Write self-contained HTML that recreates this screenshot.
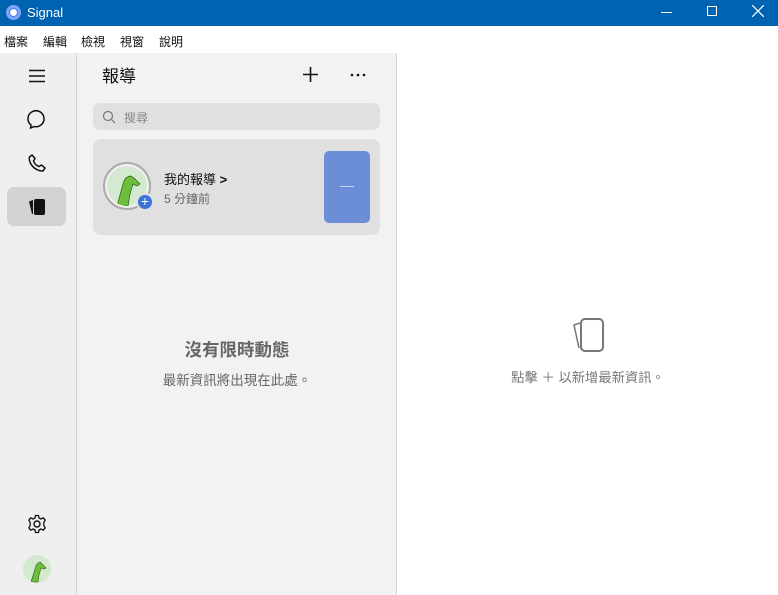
<!DOCTYPE html>
<html><head><meta charset="utf-8"><style>
*{margin:0;padding:0;box-sizing:border-box}
body{width:778px;height:595px;overflow:hidden;background:#fff;font-family:"Liberation Sans","Noto Sans CJK TC",sans-serif;position:relative}
.title{position:absolute;left:0;top:0;width:778px;height:26px;background:#0063b1;color:#fff;font-size:13px}
.menu{position:absolute;top:26px;left:0;width:778px;height:27px;background:#fff;font-size:12px;color:#111}
.menu span{position:absolute;top:7px}
.side{position:absolute;left:0;top:53px;width:77px;height:542px;background:#efefef;border-right:1px solid #d4d4d4}
.mid{position:absolute;left:77px;top:53px;width:320px;height:542px;background:#f2f2f2;border-right:1px solid #d4d4d4}
.abs{position:absolute}
</style></head><body>
<div class="title">
 <div class="abs" style="left:6px;top:5px;width:15px;height:15px;border-radius:50%;background:#3a76f0;box-shadow:inset 0 0 0 3px #7ea6f8"></div>
 <div class="abs" style="left:10px;top:9px;width:7px;height:7px;border-radius:50%;background:#fff"></div>
 <span class="abs" style="left:27px;top:5px">Signal</span>
 <div class="abs" style="left:661px;top:12px;width:11px;height:1px;background:#fff"></div>
 <div class="abs" style="left:707px;top:6px;width:10px;height:10px;border:1px solid #fff"></div>
 <svg class="abs" style="left:752px;top:5px" width="12" height="12"><path d="M0 0L12 12M12 0L0 12" stroke="#fff" stroke-width="1.2"/></svg>
</div>
<div class="menu"><span style="left:4px">檔案</span><span style="left:43px">編輯</span><span style="left:81px">檢視</span><span style="left:120px">視窗</span><span style="left:159px">說明</span></div>
<div class="side">
 <svg class="abs" style="left:29px;top:16px" width="16" height="14"><path d="M0 1.5H16M0 7H16M0 12.5H16" stroke="#111" stroke-width="1.6"/></svg>
 <svg class="abs" style="left:27px;top:56px" width="20" height="20"><path d="M4 16L3.5 19L7 17.5A8 8 0 1 0 4 16Z" fill="none" stroke="#111" stroke-width="1.5"/></svg>
 <svg class="abs" style="left:27px;top:100px" width="20" height="20"><path d="M5 2L8 5.5L6.5 8Q8 12 12 13.5L14.5 12L18 15L16 18Q9 18 4.5 12Q1.5 7 2.5 4Z" fill="none" stroke="#111" stroke-width="1.5"/></svg>
 <div class="abs" style="left:7px;top:134px;width:59px;height:39px;background:#d2d2d2;border-radius:7px"></div>
 <svg class="abs" style="left:28px;top:144px" width="18" height="20"><path d="M5 3L1 4.5L4 17L5 17Z" fill="#111"/><rect x="6" y="2" width="11" height="16" rx="2" fill="#111"/></svg>
 <svg class="abs" style="left:27px;top:461px" width="20" height="20"><circle cx="10" cy="10" r="3" fill="none" stroke="#111" stroke-width="1.4"/><path d="M8.5 1.5H11.5L12 4L14 5L16.3 3.8L18.2 6.2L16.8 8.5V11.5L18.2 13.8L16.3 16.2L14 15L12 16L11.5 18.5H8.5L8 16L6 15L3.7 16.2L1.8 13.8L3.2 11.5V8.5L1.8 6.2L3.7 3.8L6 5L8 4Z" fill="none" stroke="#111" stroke-width="1.3" stroke-linejoin="round"/></svg>
 <div class="abs" style="left:23px;top:502px;width:28px;height:28px;border-radius:50%;background:#d4ead0;overflow:hidden">
  <svg width="28" height="28"><path d="M8 27L12 14Q13 8 17 7L19 9L23 13L21 14L18 13L16 20L15 27Z" fill="#6cbf3b" stroke="#2c5a18" stroke-width=".6"/></svg></div>
</div>
<div class="mid">
 <div class="abs" style="left:25px;top:9px;font-size:17px;color:#111">報導</div>
 <svg class="abs" style="left:226px;top:14px" width="15" height="15"><path d="M7.5 0V15M0 7.5H15" stroke="#111" stroke-width="1.6"/></svg>
 <svg class="abs" style="left:273px;top:20px" width="16" height="4"><circle cx="2" cy="2" r="1.3" fill="#111"/><circle cx="8" cy="2" r="1.3" fill="#111"/><circle cx="14" cy="2" r="1.3" fill="#111"/></svg>
 <div class="abs" style="left:16px;top:50px;width:287px;height:27px;background:#e0e0e0;border-radius:7px"></div>
 <svg class="abs" style="left:25px;top:57px" width="14" height="14"><circle cx="6" cy="6" r="4.5" fill="none" stroke="#777" stroke-width="1.2"/><path d="M9.5 9.5L13 13" stroke="#777" stroke-width="1.2"/></svg>
 <div class="abs" style="left:47px;top:56px;font-size:12px;color:#888">搜尋</div>
 <div class="abs" style="left:16px;top:86px;width:287px;height:96px;background:#e0e0e0;border-radius:8px"></div>
 <div class="abs" style="left:26px;top:109px;width:48px;height:48px;border-radius:50%;border:2px solid #aaa;background:#f2f2f2"></div>
 <div class="abs" style="left:30px;top:113px;width:40px;height:40px;border-radius:50%;background:#d4ead0;overflow:hidden">
  <svg width="40" height="40"><path d="M10 40L16 18Q18 10 24 10L27 12L33 18L30 20L26 18L23 28L21 40Z" fill="#6cbf3b" stroke="#2c5a18" stroke-width=".7"/></svg></div>
 <div class="abs" style="left:59px;top:140px;width:18px;height:18px;border-radius:50%;background:#3b73d8;border:2px solid #e0e0e0;color:#fff;font-size:14px;line-height:13px;text-align:center">+</div>
 <div class="abs" style="left:87px;top:116px;font-size:13px;color:#111">我的報導 <b style="font-weight:bold">&gt;</b></div>
 <div class="abs" style="left:87px;top:137px;font-size:12px;color:#666">5 分鐘前</div>
 <div class="abs" style="left:247px;top:98px;width:46px;height:72px;background:#6b8ed6;border-radius:5px"></div>
 <div class="abs" style="left:263px;top:133px;width:14px;height:1px;background:#c8d4f0"></div>
 <div class="abs" style="left:0;top:284px;width:320px;text-align:center;font-size:17.5px;color:#666;font-weight:bold">沒有限時動態</div>
 <div class="abs" style="left:0;top:316px;width:320px;text-align:center;font-size:13.5px;color:#666">最新資訊將出現在此處。</div>
</div>
<svg class="abs" style="left:572px;top:318px" width="34" height="36"><path d="M8 5L2 7L7 30" fill="none" stroke="#777" stroke-width="1.5"/><rect x="9" y="1" width="22" height="32" rx="4" fill="none" stroke="#777" stroke-width="2"/></svg>
<div class="abs" style="left:398px;top:367px;width:380px;text-align:center;font-size:13.3px;color:#777">點擊 ＋ 以新增最新資訊。</div>
</body></html>
